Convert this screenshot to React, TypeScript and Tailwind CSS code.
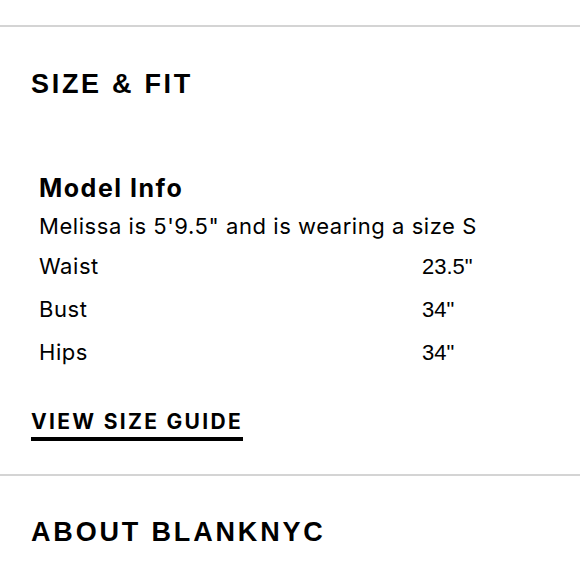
import React from 'react';

const measurements = [
  { label: 'Waist', value: '23.5"' },
  { label: 'Bust', value: '34"' },
  { label: 'Hips', value: '34"' },
];

const App = () => {
  return (
    <div className="w-[580px] h-[580px] overflow-hidden bg-white text-black" style={{ fontFamily: 'Inter, "Liberation Sans", sans-serif' }}>
      <div className="h-[25px]" />
      <section className="border-t-2 border-[#d4d4d4]">
        <h2 className="pl-[31px] pt-[41px] text-[27px] leading-[32px] font-bold tracking-[0.1em] font-['Liberation_Sans',sans-serif]">
          SIZE &amp; FIT
        </h2>

        <div className="pl-[39px] pt-[73px] pr-[20px]">
          <h3 className="text-[25px] leading-[30px] font-bold tracking-[0.06em]">Model Info</h3>
          <p className="text-[22px] leading-[34px] mt-[6px] tracking-[0.025em]">Melissa is 5'9.5" and is wearing a size S</p>
          <div className="mt-[2px]">
            {measurements.map((m) => (
              <div key={m.label} className="flex items-center h-[43px] text-[22px] tracking-[0.025em]">
                <span className="w-[383px]">{m.label}</span>
                <span className="font-['Liberation_Sans',sans-serif] tracking-normal">{m.value}</span>
              </div>
            ))}
          </div>
        </div>

        <div className="pl-[31px] pt-[34px] pb-[33px]">
          <a className="inline-block border-b-4 border-black text-[21px] leading-[28px] pb-[1px] font-bold tracking-[0.11em]">
            VIEW SIZE GUIDE
          </a>
        </div>
      </section>

      <section className="border-t-2 border-[#d4d4d4]">
        <h2 className="pl-[31px] pt-[40px] text-[27px] leading-[32px] font-bold tracking-[0.105em] font-['Liberation_Sans',sans-serif]">
          ABOUT BLANKNYC
        </h2>
      </section>
    </div>
  );
};

export default App;
